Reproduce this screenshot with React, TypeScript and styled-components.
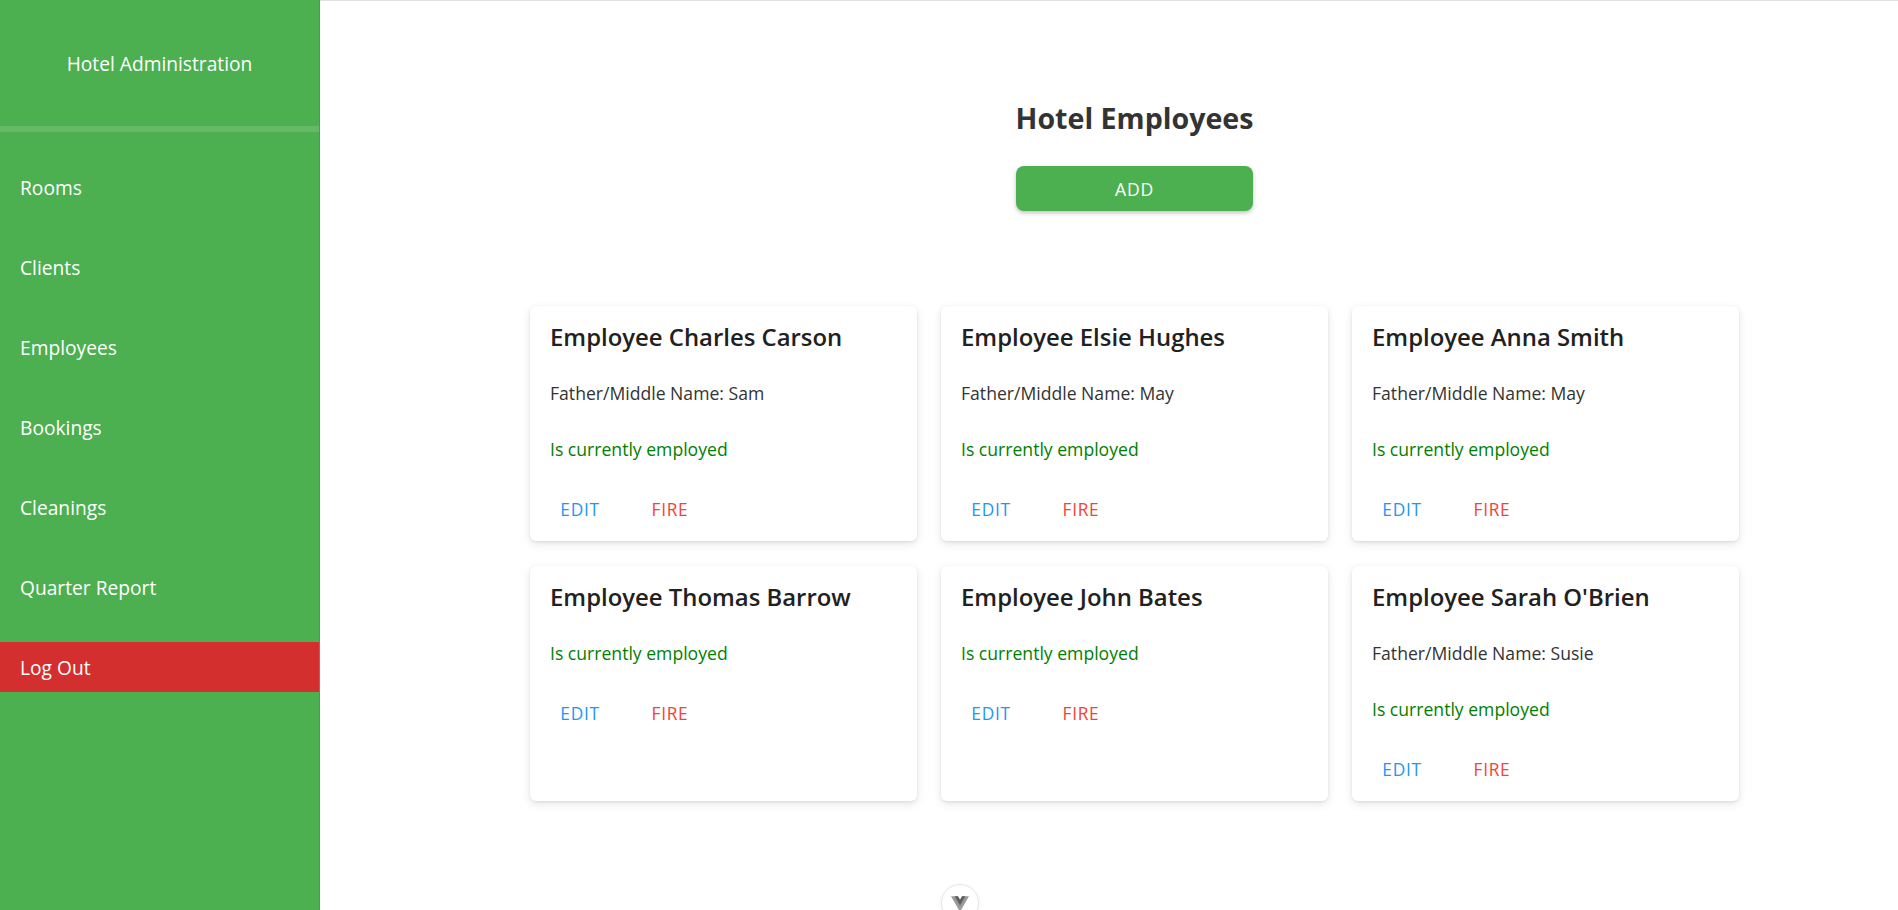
import React from "react";
import styled, { createGlobalStyle } from "styled-components";

const GlobalStyle = createGlobalStyle`
  html, body {
    margin: 0;
    padding: 0;
  }
  body {
    font-family: "Open Sans", "Noto Sans", "Liberation Sans", sans-serif;
    background: #ffffff;
    overflow: hidden;
  }
  * {
    box-sizing: border-box;
  }
`;

const Layout = styled.div`
  display: flex;
  min-height: 100vh;
`;

const Sidebar = styled.aside`
  width: 320px;
  flex-shrink: 0;
  background: #4caf50;
  border-right: 1px solid #43a047;
  display: flex;
  flex-direction: column;
  min-height: 100vh;
`;

const SidebarHeader = styled.div`
  height: 126px;
  display: flex;
  align-items: center;
  justify-content: center;
  color: #ffffff;
  font-size: 19.2px;
`;

const SidebarDivider = styled.div`
  height: 6px;
  background: rgba(255, 255, 255, 0.13);
`;

const NavList = styled.nav`
  display: flex;
  flex-direction: column;
  gap: 30px;
  padding-top: 30px;
`;

const NavItem = styled.a<{ $danger?: boolean }>`
  height: 50px;
  display: flex;
  align-items: center;
  padding-left: 20px;
  color: #ffffff;
  font-size: 19.2px;
  text-decoration: none;
  cursor: pointer;
  background: ${(p) => (p.$danger ? "#d32f2f" : "transparent")};
`;

const Main = styled.main`
  flex: 1;
  border-top: 1px solid #e0e0e0;
  padding: 100px 0 0 51px;
  display: flex;
  flex-direction: column;
  align-items: center;
`;

const PageTitle = styled.h1`
  margin: 0;
  font-size: 28.6px;
  line-height: 34px;
  font-weight: 700;
  color: #333333;
`;

const AddButton = styled.button`
  margin-top: 31px;
  width: 237px;
  height: 45px;
  border: none;
  border-radius: 8px;
  background: #4caf50;
  color: #ffffff;
  font-family: inherit;
  font-size: 17.6px;
  letter-spacing: 0.04em;
  text-transform: uppercase;
  box-shadow: 0 2px 4px rgba(0, 0, 0, 0.25);
  cursor: pointer;
`;

const CardGrid = styled.section`
  margin-top: 95px;
  display: grid;
  grid-template-columns: repeat(3, 387px);
  column-gap: 24px;
  row-gap: 25px;
`;

const Card = styled.article`
  background: #ffffff;
  border-radius: 6px;
  padding: 15px 20px 14px;
  box-shadow: 0 3px 10px rgba(0, 0, 0, 0.1), 0 1px 3px rgba(0, 0, 0, 0.08);
`;

const CardTitle = styled.h2`
  margin: 0;
  font-size: 23.9px;
  line-height: 32px;
  font-weight: 600;
  color: #212121;
`;

const Detail = styled.p<{ $tone?: "muted" | "success" }>`
  margin: 27px 0 0;
  font-size: 17.6px;
  line-height: 27px;
  color: ${(p) => (p.$tone === "success" ? "#008000" : "#333333")};

  & + & {
    margin-top: 29px;
  }
`;

const Actions = styled.div`
  margin: 28px 0 0 -2px;
  display: flex;
  gap: 26px;
`;

const TextButton = styled.button<{ $variant: "edit" | "fire" }>`
  min-width: 64px;
  height: 36px;
  padding: 0 8px;
  border: none;
  background: transparent;
  font-family: inherit;
  font-size: 17.3px;
  letter-spacing: 0.04em;
  text-transform: uppercase;
  color: ${(p) => (p.$variant === "edit" ? "#2196f3" : "#f44336")};
  cursor: pointer;
`;

const DevtoolsButton = styled.div`
  position: fixed;
  left: 941px;
  top: 884px;
  width: 38px;
  height: 38px;
  border-radius: 50%;
  background: #ffffff;
  border: 1px solid #e6e6e6;
  box-shadow: 0 1px 4px rgba(0, 0, 0, 0.06);
  display: flex;
  justify-content: center;
  padding-top: 11px;
`;

type Employee = {
  name: string;
  middle?: string;
};

const employees: Employee[] = [
  { name: "Charles Carson", middle: "Sam" },
  { name: "Elsie Hughes", middle: "May" },
  { name: "Anna Smith", middle: "May" },
  { name: "Thomas Barrow" },
  { name: "John Bates" },
  { name: "Sarah O'Brien", middle: "Susie" },
];

const navItems = ["Rooms", "Clients", "Employees", "Bookings", "Cleanings", "Quarter Report"];

const VueMark = () => (
  <svg width="18" height="16" viewBox="0 0 261.76 226.69">
    <path d="M161.096.001l-30.225 52.351L100.647.001H-.005l130.877 226.688L261.749.001z" fill="#9a9a9a" />
    <path d="M161.096.001l-30.225 52.351L100.647.001H52.346l78.526 136.01L209.398.001z" fill="#5f5f5f" />
  </svg>
);

export default function App() {
  return (
    <>
      <GlobalStyle />
      <Layout>
        <Sidebar>
          <SidebarHeader>Hotel Administration</SidebarHeader>
          <SidebarDivider />
          <NavList>
            {navItems.map((item) => (
              <NavItem key={item}>{item}</NavItem>
            ))}
            <NavItem $danger>Log Out</NavItem>
          </NavList>
        </Sidebar>
        <Main>
          <PageTitle>Hotel Employees</PageTitle>
          <AddButton>Add</AddButton>
          <CardGrid>
            {employees.map((e) => (
              <Card key={e.name}>
                <CardTitle>Employee {e.name}</CardTitle>
                {e.middle && <Detail $tone="muted">Father/Middle Name: {e.middle}</Detail>}
                <Detail $tone="success">Is currently employed</Detail>
                <Actions>
                  <TextButton $variant="edit">Edit</TextButton>
                  <TextButton $variant="fire">Fire</TextButton>
                </Actions>
              </Card>
            ))}
          </CardGrid>
        </Main>
      </Layout>
      <DevtoolsButton>
        <VueMark />
      </DevtoolsButton>
    </>
  );
}
